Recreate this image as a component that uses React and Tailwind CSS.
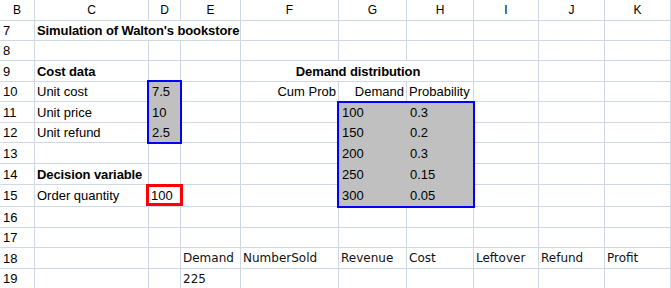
import React from 'react';

const COL = ['', 'col-start-1', 'col-start-2', 'col-start-3', 'col-start-4', 'col-start-5', 'col-start-6', 'col-start-7', 'col-start-8', 'col-start-9', 'col-start-10'];
const ROW = ['', 'row-start-1', 'row-start-2', 'row-start-3', 'row-start-4', 'row-start-5', 'row-start-6', 'row-start-7', 'row-start-8', 'row-start-9', 'row-start-10', 'row-start-11', 'row-start-12', 'row-start-13', 'row-start-14'];
const LETTERS = ['B', 'C', 'D', 'E', 'F', 'G', 'H', 'I', 'J', 'K'];

// sheet rows 7..19 live in grid rows 2..14
const CELLS = {
  '2-2': { text: "Simulation of Walton's bookstore", span: 'col-span-3', bold: true },
  '4-2': { text: 'Cost data', bold: true },
  '4-5': { text: 'Demand distribution', span: 'col-span-3', bold: true, center: true },
  '5-2': { text: 'Unit cost' },
  '5-3': { text: '7.5', fill: true },
  '5-5': { text: 'Cum Prob', right: true },
  '5-6': { text: 'Demand', right: true },
  '5-7': { text: 'Probability' },
  '6-2': { text: 'Unit price' },
  '6-3': { text: '10', fill: true },
  '6-6': { text: '100', fill: true },
  '6-7': { text: '0.3', fill: true },
  '7-2': { text: 'Unit refund' },
  '7-3': { text: '2.5', fill: true },
  '7-6': { text: '150', fill: true },
  '7-7': { text: '0.2', fill: true },
  '8-6': { text: '200', fill: true },
  '8-7': { text: '0.3', fill: true },
  '9-2': { text: 'Decision variable', bold: true },
  '9-6': { text: '250', fill: true },
  '9-7': { text: '0.15', fill: true },
  '10-2': { text: 'Order quantity' },
  '10-3': { text: '100' },
  '10-6': { text: '300', fill: true },
  '10-7': { text: '0.05', fill: true },
  '13-4': { text: 'Demand', alt: true },
  '13-5': { text: 'NumberSold', alt: true },
  '13-6': { text: 'Revenue', alt: true },
  '13-7': { text: 'Cost', alt: true },
  '13-8': { text: 'Leftover', alt: true },
  '13-9': { text: 'Refund', alt: true },
  '13-10': { text: 'Profit', alt: true },
  '14-4': { text: '225', alt: true },
};

const COVERED = new Set(['2-3', '2-4', '4-6', '4-7']);

function Cell({ r, c, cell }) {
  const cls = [
    COL[c],
    ROW[r],
    cell?.span || '',
    'flex items-center whitespace-nowrap border-r border-b',
    cell?.fill ? 'bg-[#c0c0c0] border-[#c0c0c0] pl-[3px]' : 'bg-white border-[#d0d7e5] pl-[2px]',
    cell?.bold ? 'font-bold tracking-[-0.1px]' : '',
    cell?.center ? 'justify-center' : '',
    cell?.right ? 'justify-end pr-[2px]' : '',
    cell?.alt ? "font-['DejaVu_Sans',sans-serif] text-[12px] text-[#111]" : '',
  ].join(' ');
  return <div className={cls}>{cell?.text}</div>;
}

export default function App() {
  const items = [];

  LETTERS.forEach((l, i) => {
    items.push(
      <div key={`h-${l}`} className={`${COL[i + 1]} row-start-1 flex items-center justify-center border-r border-b border-[#d0d7e5] bg-white text-[12px]`}>
        {l}
      </div>
    );
  });

  for (let r = 2; r <= 14; r++) {
    items.push(
      <div key={`n-${r}`} className={`col-start-1 ${ROW[r]} flex items-center pl-[3px] border-r border-b border-[#d0d7e5] bg-white`}>
        {r + 5}
      </div>
    );
    for (let c = 2; c <= 10; c++) {
      const key = `${r}-${c}`;
      if (COVERED.has(key)) continue;
      items.push(<Cell key={key} r={r} c={c} cell={CELLS[key]} />);
    }
  }

  return (
    <div className="w-[671px] h-[288px] overflow-hidden bg-white">
      <div className="grid grid-cols-[35px_114px_32px_60px_98px_68px_67px_65px_66px_66px] grid-rows-[21px_20px_20px_21px_20px_21px_20px_21px_21px_22px_21px_20px_21px_20px] font-['Liberation_Sans',Arial,sans-serif] text-[13px] text-black leading-none">
        {items}

        {/* cost inputs */}
        <div className="col-start-3 row-start-5 row-span-3 -ml-[2px] -mt-[2px] -mr-[1px] -mb-[1px] border-2 border-[#0000ff] pointer-events-none" />
        {/* demand table */}
        <div className="col-start-6 col-span-2 row-start-6 row-span-5 -ml-[2px] -mt-[1px] -mr-[1px] -mb-[1px] border-2 border-[#0000ff] pointer-events-none" />
        {/* decision variable */}
        <div className="col-start-3 row-start-10 -ml-[3px] -mt-[1px] -mr-[2px] mb-[1px] border-[3px] border-[#ff0000] pointer-events-none" />
      </div>
    </div>
  );
}
